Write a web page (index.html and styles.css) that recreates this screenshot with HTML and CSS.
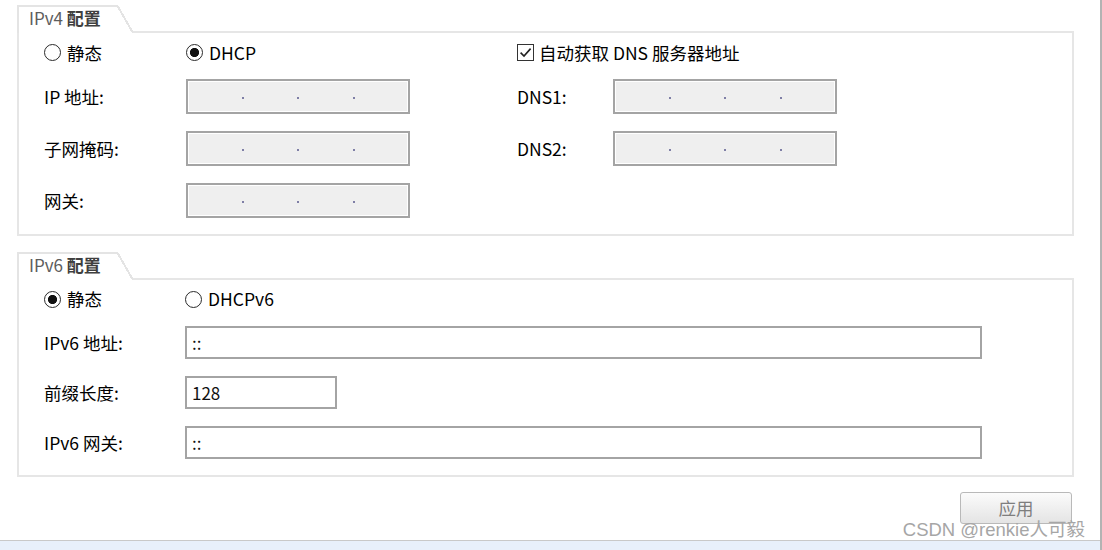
FILE: index.html
```html
<!DOCTYPE html>
<html lang="zh-CN">
<head>
<meta charset="utf-8">
<title>网络配置</title>
<link rel="stylesheet" href="styles.css">
</head>
<body>
<div class="window">
<main class="content">

<section class="group">
<div class="tab"><span class="tab-label">IPv4 <b>配置</b></span><span class="tab-slant"></span></div>
<div class="box v4">
 <label class="opt c1"><span class="radio"></span>静态</label>
 <label class="opt c2"><span class="radio on"></span>DHCP</label>
 <label class="opt c45"><span class="check"><svg width="17" height="17" viewBox="0 0 17 17"><path d="M3.6 8.6 L7 12 L13.6 4.6" fill="none" stroke="#222" stroke-width="1.6"/></svg></span>自动获取 DNS 服务器地址</label>

 <span class="lbl c1">IP 地址:</span>
 <span class="ip c2"><i></i><i></i><i></i></span>
 <span class="lbl c4">DNS1:</span>
 <span class="ip c5"><i></i><i></i><i></i></span>

 <span class="lbl c1">子网掩码:</span>
 <span class="ip c2"><i></i><i></i><i></i></span>
 <span class="lbl c4">DNS2:</span>
 <span class="ip c5"><i></i><i></i><i></i></span>

 <span class="lbl c1">网关:</span>
 <span class="ip c2"><i></i><i></i><i></i></span>
</div>
</section>

<section class="group next">
<div class="tab"><span class="tab-label">IPv6 <b>配置</b></span><span class="tab-slant"></span></div>
<div class="box v6">
 <div class="opts">
  <label class="opt"><span class="radio on"></span>静态</label>
  <label class="opt"><span class="radio"></span>DHCPv6</label>
 </div>
 <span class="lbl">IPv6 地址:</span>
 <input class="txt wide" type="text" value="::">
 <span class="lbl">前缀长度:</span>
 <input class="txt short" type="text" value="128">
 <span class="lbl">IPv6 网关:</span>
 <input class="txt wide" type="text" value="::">
</div>
</section>

<div class="actions"><button type="button">应用</button></div>
</main>
<div class="statusbar"></div>
<div class="mark">CSDN @renkie人可毅</div>
</div>
</body>
</html>
```

FILE: styles.css
```css
*{box-sizing:border-box;}
body{margin:0;background:#fff;color:#000;
font-family:"Noto Sans CJK SC","Noto Sans",sans-serif;font-size:17.5px;line-height:20px;}
.window{position:relative;width:1102px;height:550px;display:flex;flex-direction:column;border-right:2px solid #b3b3b3;overflow:hidden;}
.content{flex:1;padding:5px 26px 0 17px;}
.statusbar{height:10px;border-top:1px solid #c9c9c9;background:#e8f0fb;}

/* group box with tab */
.group.next{margin-top:16px;}
.tab{display:flex;height:28px;margin-bottom:-2px;position:relative;z-index:1;}
.tab-label{width:100px;background:#fff;border-top:2px solid #e4e4e4;border-left:2px solid #e4e4e4;
padding:0 0 4px 10px;line-height:22px;font-size:17px;color:#5d5d5d;white-space:nowrap;}
.tab-label b{color:#3f3f3f;}
.tab-slant{width:16px;background:linear-gradient(to bottom left,transparent calc(50% - 1px),#e4e4e4 calc(50% - 1px),#e4e4e4 calc(50% + 1px),#fff calc(50% + 1px));}
.box{border:2px solid #e6e6e6;display:grid;padding-left:25px;}
.v4{grid-template-columns:142px 224px 107px 96px 224px;grid-template-rows:19px 35px 35px 35px;
row-gap:17px;padding-top:10px;padding-bottom:16px;}
.v6{grid-template-columns:141px 797px;grid-template-rows:20px 33px 33px 33px;
row-gap:17px;padding-top:9px;padding-bottom:16px;}
.c1{grid-column:1;}
.c2{grid-column:2;}
.c4{grid-column:4;}
.c5{grid-column:5;}
.c45{grid-column:4/6;}
.opts{grid-column:1/3;display:grid;grid-template-columns:141px auto;}

/* options */
.opt{display:flex;align-items:center;gap:6px;}
.radio{width:17px;height:17px;border:1.5px solid #2b2b2b;border-radius:50%;}
.radio.on{background:radial-gradient(circle,#111 0 4.3px,transparent 4.8px);}
.check{width:17px;height:17px;border:1.5px solid #333;display:flex;align-items:center;justify-content:center;margin-right:-1px;}
.check svg{flex:none;}
.lbl{align-self:center;}

/* address fields */
.ip{display:flex;justify-content:space-evenly;align-items:center;padding-top:3px;
background:#efefef;border:2px solid #a4a4a4;box-shadow:inset 0 0 0 1px #fff;}
.ip i{width:2px;height:2px;background:#7f7fa6;}
.txt{font:inherit;font-size:17px;color:#111;height:33px;padding:0 5px;background:#fff;border:2px solid #a4a4a4;outline:none;}
.txt.wide{width:797px;}
.txt.short{width:152px;}

.actions{display:flex;justify-content:flex-end;padding-top:15px;padding-right:2px;}
.actions button{width:112px;height:32px;font:inherit;color:#7e7e7e;border:1px solid #b9b9b9;border-radius:3px;
background:linear-gradient(#fbfbfb,#e4e4e4);}
.mark{position:absolute;right:15px;bottom:9px;font-family:"Liberation Sans","Noto Sans CJK SC",sans-serif;
font-size:18.5px;line-height:22px;color:#a6a6a6;}
```
